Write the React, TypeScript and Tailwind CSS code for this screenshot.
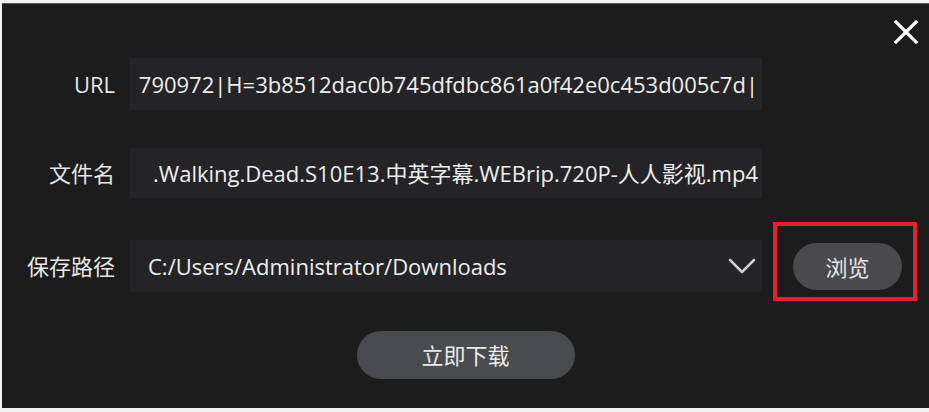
import React from "react";

const font = { fontFamily: '"Open Sans", "Noto Sans CJK SC", sans-serif' };

function Label({ children }: { children: React.ReactNode }) {
  return (
    <div className="w-[113px] shrink-0 text-right text-[22px] text-[#e6e6e6] leading-none">
      {children}
    </div>
  );
}

export default function App() {
  return (
    <div className="w-[929px] h-[412px] bg-[#f2f2f2] pt-[3px] pl-[2px] overflow-hidden" style={font}>
      <div className="relative w-[927px] h-[405px] bg-[#1c1c1c] border-t border-[#5a5a5a] pt-[54px]">
        {/* close */}
        <button className="absolute left-[892px] top-[16px] w-[24px] h-[24px]">
          <svg viewBox="0 0 24 24" className="w-[24px] h-[24px]" fill="none" stroke="#ffffff" strokeWidth="3.2" strokeLinecap="square">
            <line x1="2" y1="2" x2="22" y2="22" />
            <line x1="22" y1="2" x2="2" y2="22" />
          </svg>
        </button>

        {/* URL */}
        <div className="flex items-center h-[52px]">
          <Label>URL</Label>
          <div className="ml-[15px] w-[632px] h-[52px] bg-[#242426] flex items-center">
            <div className="ml-[8px] mr-[4px] flex-1 flex justify-end whitespace-nowrap text-[22px] text-[#eeeeee]">
              <span>790972|H=3b8512dac0b745dfdbc861a0f42e0c453d005c7d|</span>
            </div>
          </div>
        </div>

        {/* filename */}
        <div className="flex items-center h-[50px] mt-[38px]">
          <Label>文件名</Label>
          <div className="ml-[15px] w-[632px] h-[50px] bg-[#242426] flex items-center">
            <div className="ml-[12px] mr-[4px] flex-1 flex justify-end whitespace-nowrap text-[22px] text-[#eeeeee]">
              <span>.Walking.Dead.S10E13.中英字幕.WEBrip.720P-人人影视.mp4</span>
            </div>
          </div>
        </div>

        {/* save path */}
        <div className="flex items-center h-[52px] mt-[42px]">
          <Label>保存路径</Label>
          <div className="ml-[15px] w-[632px] h-[52px] bg-[#242426] flex items-center pl-[18px] pr-[5px]">
            <span className="flex-1 text-[22px] text-[#eeeeee] whitespace-nowrap">C:/Users/Administrator/Downloads</span>
            <svg viewBox="0 0 30 18" className="w-[30px] h-[18px]" fill="none" stroke="#d0d0d0" strokeWidth="2.5" strokeLinecap="round" strokeLinejoin="round">
              <polyline points="3,3 15,15 27,3" />
            </svg>
          </div>
          <div className="self-start -mt-[18px] ml-[11px] w-[144px] h-[79px] border-4 border-[#e2232d] pl-[16px] pt-[17px]">
            <button className="w-[109px] h-[47px] rounded-full bg-[#4a4a4d] text-[22px] text-[#e6e6e6] leading-none">
              浏览
            </button>
          </div>
        </div>

        {/* download */}
        <div className="flex justify-center mt-[39px]">
          <button className="w-[218px] h-[48px] rounded-full bg-[#4a4b4f] text-[22px] text-[#eaeaea] leading-none">
            立即下载
          </button>
        </div>
      </div>
    </div>
  );
}
